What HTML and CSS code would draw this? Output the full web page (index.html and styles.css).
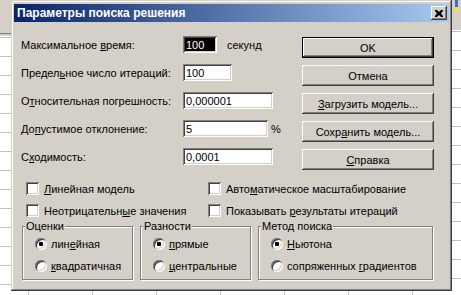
FILE: index.html
```html
<!DOCTYPE html>
<html lang="ru">
<head>
    <meta charset="UTF-8">
    <title>Параметры поиска решения</title>
    <link rel="stylesheet" href="styles.css">
</head>
<body>
    <div class="desk">
        <div class="strip-left"></div>
        <div class="dialog">
            <div class="titlebar">
                <span class="title">Параметры поиска решения</span>
                <button class="close" type="button">
                    <svg width="8" height="7" viewBox="0 0 8 7"><path d="M0 0h2l2 2 2-2h2v1L6 3.5 8 6v1H6L4 5 2 7H0V6l2-2.5L0 1z" fill="#000"/></svg>
                </button>
            </div>
            <div class="content">
                <div class="top">
                    <div class="fields">
                        <div class="row">
                            <label for="maxTime">Максимальное <u>в</u>ремя:</label>
                            <input class="f w34 sel" id="maxTime" type="text" value="100">
                            <span class="unit">секунд</span>
                        </div>
                        <div class="row">
                            <label for="maxIter">Предел<u>ь</u>ное число итераций:</label>
                            <input class="f w49" id="maxIter" type="text" value="100">
                        </div>
                        <div class="row">
                            <label for="precision">О<u>т</u>носительная погрешность:</label>
                            <input class="f w90" id="precision" type="text" value="0,000001">
                        </div>
                        <div class="row">
                            <label for="tolerance">До<u>п</u>устимое отклонение:</label>
                            <input class="f w85" id="tolerance" type="text" value="5">
                            <span class="unit pct">%</span>
                        </div>
                        <div class="row">
                            <label for="converge">С<u>х</u>одимость:</label>
                            <input class="f w90" id="converge" type="text" value="0,0001">
                        </div>
                    </div>
                    <div class="buttons">
                        <button class="btn default" type="button">OK</button>
                        <button class="btn" type="button">Отмена</button>
                        <button class="btn" type="button"><u>З</u>агрузить модель...</button>
                        <button class="btn" type="button">Сохр<u>а</u>нить модель...</button>
                        <button class="btn" type="button"><u>С</u>правка</button>
                    </div>
                </div>
                <div class="checks">
                    <label class="check"><input type="checkbox"><span><u>Л</u>инейная модель</span></label>
                    <label class="check"><input type="checkbox"><span>Авто<u>м</u>атическое масштабирование</span></label>
                    <label class="check"><input type="checkbox"><span>Неотрицательн<u>ы</u>е значения</span></label>
                    <label class="check"><input type="checkbox"><span>Показывать <u>р</u>езультаты итераций</span></label>
                </div>
                <div class="groups">
                    <fieldset class="group g-small">
                        <legend>Оценки</legend>
                        <label class="radio"><input type="radio" name="est" checked><span>лин<u>е</u>йная</span></label>
                        <label class="radio"><input type="radio" name="est"><span><u>к</u>вадратичная</span></label>
                    </fieldset>
                    <fieldset class="group g-small">
                        <legend>Разности</legend>
                        <label class="radio"><input type="radio" name="diff" checked><span><u>п</u>рямые</span></label>
                        <label class="radio"><input type="radio" name="diff"><span><u>ц</u>ентральные</span></label>
                    </fieldset>
                    <fieldset class="group g-wide">
                        <legend>Метод поиска</legend>
                        <label class="radio"><input type="radio" name="method" checked><span><u>Н</u>ьютона</span></label>
                        <label class="radio"><input type="radio" name="method"><span>сопряженных <u>г</u>радиентов</span></label>
                    </fieldset>
                </div>
            </div>
        </div>
        <div class="strip-right"></div>
        <div class="strip-bottom"></div>
    </div>
</body>
</html>
```

FILE: styles.css
```css
* {
    box-sizing: border-box;
}
body {
    margin: 0;
    width: 461px;
    height: 295px;
    overflow: hidden;
    background: #fff;
    font-family: "Liberation Sans", Arial, sans-serif;
    font-size: 11px;
    color: #000;
}
.desk {
    display: grid;
    grid-template-columns: 11px 441px 9px;
    grid-template-rows: 291px 4px;
}
.strip-left {
    background:
        linear-gradient(#d4d0c8 0 33px, #808080 33px 34px, #d4d0c8 34px 36px, transparent 36px),
        repeating-linear-gradient(#fff 0 18px, #c0c0c0 18px 19px);
}
.strip-right {
    background:
        linear-gradient(to right, transparent 0 3px, #3a6fd0 3px 6px, transparent 6px) 0 0 / 9px 7px no-repeat,
        linear-gradient(to right, transparent 0 3px, #ffe800 3px 6px, transparent 6px) 0 8px / 9px 4px no-repeat,
        linear-gradient(#d4d0c8 0 30px, transparent 30px),
        repeating-linear-gradient(#fff 0 12px, #c0c0c0 12px 13px, #fff 13px 19px);
}
.strip-bottom {
    grid-column: 1 / 4;
    background: repeating-linear-gradient(to right, #fff 0 28px, #c0c0c0 28px 29px, #fff 29px 64px);
}

.dialog {
    background: #d4d0c8;
    padding: 4px 3px 0 3px;
    box-shadow: inset -1px -1px #404040, inset 1px 1px #d4d0c8, inset -2px -2px #808080, inset 2px 2px #fff;
}
.titlebar {
    height: 18px;
    display: flex;
    align-items: center;
    justify-content: space-between;
    padding: 0 2px 0 3px;
    background: linear-gradient(to right, #0a246a, #a6caf0);
}
.title {
    color: #fff;
    font-weight: bold;
    font-size: 12px;
}
.close {
    width: 16px;
    height: 14px;
    padding: 0;
    border: none;
    background: #d4d0c8;
    display: flex;
    align-items: center;
    justify-content: center;
    box-shadow: inset -1px -1px #404040, inset 1px 1px #fff, inset -2px -2px #808080, inset 2px 2px #d4d0c8;
}

.content {
    padding: 14px 15px 0 7px;
}
.top {
    display: flex;
}
.fields {
    width: 281px;
    display: flex;
    flex-direction: column;
    gap: 11px;
}
.row {
    display: flex;
    align-items: center;
    height: 17px;
}
.row label {
    width: 162px;
}
.f {
    height: 17px;
    border: none;
    padding: 0 3px;
    font: inherit;
    background: #fff;
    color: #000;
    box-shadow: inset 1px 1px #808080, inset -1px -1px #fff, inset 2px 2px #404040, inset -2px -2px #d4d0c8;
}
.f.sel {
    background: #000;
    color: #fff;
}
.w34 { width: 34px; }
.w49 { width: 49px; }
.w85 { width: 85px; }
.w90 { width: 90px; }
.unit {
    margin-left: 10px;
}
.unit.pct {
    margin-left: 3px;
}

.buttons {
    width: 132px;
    padding-top: 1px;
    display: flex;
    flex-direction: column;
    gap: 7px;
}
.btn {
    height: 21px;
    width: 132px;
    padding: 0;
    border: none;
    background: #d4d0c8;
    font: inherit;
    color: #000;
    box-shadow: inset -1px -1px #404040, inset 1px 1px #fff, inset -2px -2px #808080, inset 2px 2px #d4d0c8;
}
.btn.default {
    border: 1px solid #000;
}

.checks {
    margin-top: 12px;
    padding-left: 5px;
    display: grid;
    grid-template-columns: 182px auto;
    row-gap: 9px;
}
.check, .radio {
    display: flex;
    align-items: center;
    white-space: nowrap;
}
.check {
    height: 13px;
    gap: 5px;
}
.check input, .radio input {
    appearance: none;
    margin: 0;
    flex: none;
    background: #fff;
}
.check input {
    width: 13px;
    height: 13px;
    box-shadow: inset 1px 1px #808080, inset -1px -1px #fff, inset 2px 2px #404040, inset -2px -2px #d4d0c8;
}

.groups {
    margin-top: 3px;
    padding-left: 1px;
    display: flex;
    gap: 7px;
}
.group {
    margin: 0;
    height: 60px;
    padding: 5px 0 0 12px;
    border: 1px solid #808080;
    box-shadow: inset 1px 1px #fff, 1px 1px #fff;
    display: flex;
    flex-direction: column;
    gap: 10px;
}
.g-small { width: 111px; }
.g-wide { width: 175px; }
.group legend {
    padding: 0 1px;
    margin-left: -10px;
    line-height: 13px;
    background: #d4d0c8;
}
.radio {
    height: 12px;
    gap: 4px;
}
.radio input {
    width: 12px;
    height: 12px;
    border-radius: 50%;
    box-shadow: inset 1px 1px #808080, inset -1px -1px #fff, inset 2px 2px #404040, inset -2px -2px #d4d0c8;
}
.radio input:checked {
    background: radial-gradient(circle, #000 0 2px, #fff 2.5px);
}
```
